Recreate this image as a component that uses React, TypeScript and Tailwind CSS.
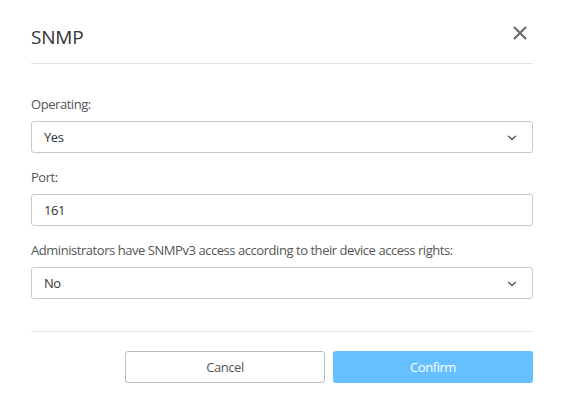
const Chevron = () => (
    <svg width="10" height="6" viewBox="0 0 10 6" fill="none" className="text-[#555]">
        <path d="M1.5 1.2 L5 4.5 L8.5 1.2" stroke="currentColor" strokeWidth="1.3" strokeLinecap="round" strokeLinejoin="round" />
    </svg>
);

const Select = ({ value }: { value: string }) => (
    <div className="h-8 border border-[#c8c8c8] rounded-[3px] flex items-center justify-between pl-3 pr-[15px] pt-[2px] text-[13px] text-[#333]">
        <span>{value}</span>
        <Chevron />
    </div>
);

const App = () => {
    return (
        <div className="w-[564px] h-[397px] bg-white font-['Open_Sans',sans-serif] tracking-[-0.45px]">
            <div className="px-[31px]">
                <div className="pt-[23px] pb-[12px] flex items-center justify-between border-b border-[#e0e0e0]">
                    <h2 className="text-[19px] leading-7 text-[#333] tracking-[-0.2px]">SNMP</h2>
                    <svg width="14" height="14" viewBox="0 0 14 14" className="mr-[6px] -mt-[8px]">
                        <path d="M1.5 1.5 L12.5 12.5 M12.5 1.5 L1.5 12.5" stroke="#666" strokeWidth="2" strokeLinecap="round" />
                    </svg>
                </div>

                <div className="pt-[31px] pb-[32px] border-b border-[#e0e0e0] flex flex-col">
                    <label className="text-[13px] leading-[18px] text-[#555] mb-[8px]">Operating:</label>
                    <Select value="Yes" />
                    <label className="text-[13px] leading-[18px] text-[#555] mt-[15px] mb-[8px]">Port:</label>
                    <div className="h-8 border border-[#c8c8c8] rounded-[3px] flex items-center pl-3 pt-[2px] text-[13px] text-[#333]">161</div>
                    <label className="text-[13px] leading-[18px] text-[#555] mt-[15px] mb-[8px]">
                        Administrators have SNMPv3 access according to their device access rights:
                    </label>
                    <Select value="No" />
                </div>

                <div className="pt-[19px] flex justify-end gap-2">
                    <button className="w-[200px] h-8 pt-[2px] border border-[#bdbdbd] rounded-[3px] text-[13px] text-[#555] bg-white">Cancel</button>
                    <button className="w-[200px] h-8 pt-[2px] rounded-[3px] text-[13px] text-white bg-[#66bfff]">Confirm</button>
                </div>
            </div>
        </div>
    );
};

export default App;
